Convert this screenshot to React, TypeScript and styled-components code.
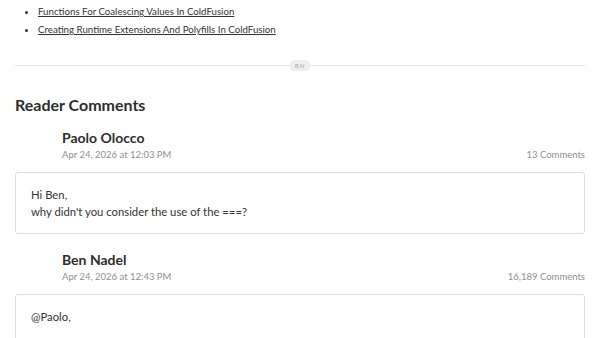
import React from 'react'
import styled, { createGlobalStyle } from 'styled-components'

const GlobalStyle = createGlobalStyle`
  body {
    margin: 0;
    background: #ffffff;
    color: #333333;
    font-family: Lato, "Open Sans", sans-serif;
  }
`

const Page = styled.div`
  padding: 0 15px;
  width: 570px;
`

const RelatedList = styled.ul`
  margin: 0;
  padding: 2px 0 0 23px;
  list-style: disc;
  font-size: 9.7px;
  line-height: 18px;
`

const RelatedItem = styled.li`
  a {
    color: #333333;
    text-decoration: underline;
  }
`

const Divider = styled.div`
  display: flex;
  align-items: center;
  margin-top: 21px;
  height: 12px;
  &::before,
  &::after {
    content: '';
    flex: 1;
    height: 1px;
    background: #e8e8e8;
  }
`

const Badge = styled.span`
  display: inline-flex;
  align-items: center;
  justify-content: center;
  width: 22px;
  height: 11px;
  border-radius: 6px;
  background: #eeeeee;
  color: #aaaaaa;
  font-size: 6px;
  letter-spacing: 1px;
`

const Heading = styled.h2`
  margin: 23px 0 0;
  font-size: 16px;
  line-height: 22px;
  font-weight: 700;
  color: #2e2e2e;
`

const Comment = styled.div`
  margin-top: 13px;
  & + & {
    margin-top: 17px;
  }
`

const Header = styled.div`
  display: flex;
  align-items: flex-end;
  justify-content: space-between;
  padding-left: 47px;
`

const Author = styled.div`
  display: flex;
  flex-direction: column;
`

const Name = styled.div`
  font-size: 14px;
  line-height: 18px;
  font-weight: 700;
  color: #2e2e2e;
`

const Meta = styled.div`
  font-size: 9.5px;
  line-height: 16px;
  color: #8f8f8f;
`

const Body = styled.div`
  margin-top: 9px;
  border: 1px solid #dddddd;
  border-radius: 3px;
  padding: 13px 15px 13px;
  font-size: 11.3px;
  line-height: 17px;
  color: #333333;
  p {
    margin: 0;
  }
`

const comments = [
  {
    name: 'Paolo Olocco',
    date: 'Apr 24, 2026 at 12:03 PM',
    count: '13 Comments',
    lines: ['Hi Ben,', "why didn't you consider the use of the ===?"],
  },
  {
    name: 'Ben Nadel',
    date: 'Apr 24, 2026 at 12:43 PM',
    count: '16,189 Comments',
    lines: ['@Paolo,', ''],
  },
]

function App() {
  return (
    <>
      <GlobalStyle />
      <Page>
        <RelatedList>
          <RelatedItem>
            <a href="#">Functions For Coalescing Values In ColdFusion</a>
          </RelatedItem>
          <RelatedItem>
            <a href="#">Creating Runtime Extensions And Polyfills In ColdFusion</a>
          </RelatedItem>
        </RelatedList>

        <Divider>
          <Badge>BN</Badge>
        </Divider>

        <Heading>Reader Comments</Heading>

        {comments.map((comment) => (
          <Comment key={comment.name}>
            <Header>
              <Author>
                <Name>{comment.name}</Name>
                <Meta>{comment.date}</Meta>
              </Author>
              <Meta>{comment.count}</Meta>
            </Header>
            <Body>
              {comment.lines.map((line, i) => (
                <p key={i}>{line || '\u00a0'}</p>
              ))}
            </Body>
          </Comment>
        ))}
      </Page>
    </>
  )
}

export default App
